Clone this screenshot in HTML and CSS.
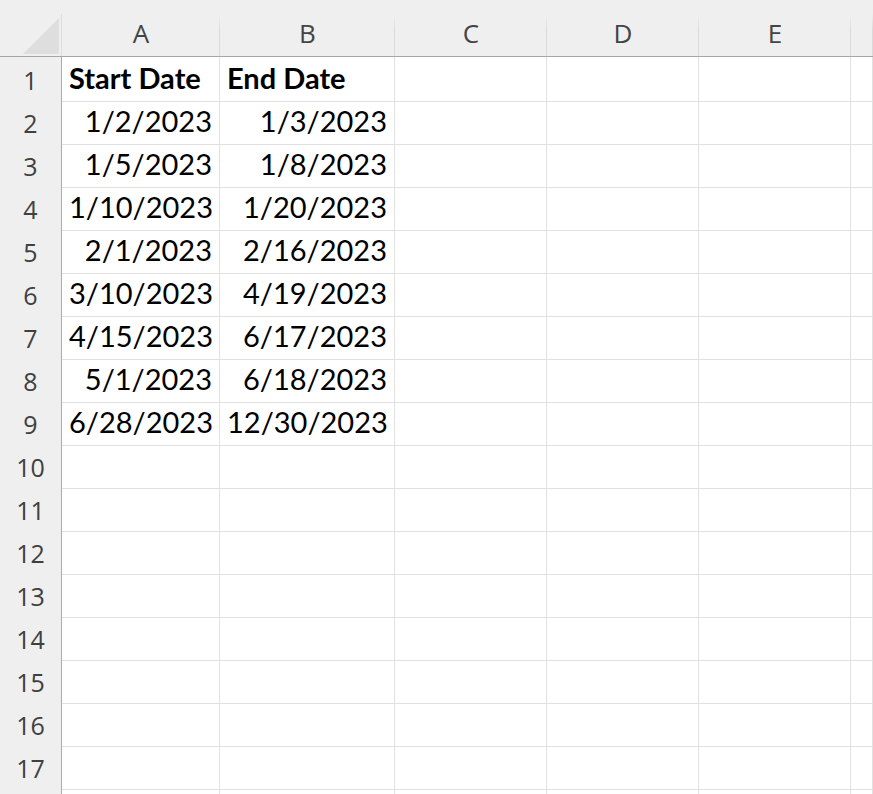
FILE: index.html
```html
<!DOCTYPE html>
<html lang="en">
<head>
    <meta charset="UTF-8">
    <title>Dates</title>
    <link rel="stylesheet" href="styles.css">
</head>
<body>
    <div class="sheet">
        <div class="row head-row">
            <div class="corner"><span class="corner-mark"></span></div>
            <div class="col-head">A</div>
            <div class="col-head">B</div>
            <div class="col-head">C</div>
            <div class="col-head">D</div>
            <div class="col-head">E</div>
            <div class="col-head"></div>
        </div>
        <div class="row">
            <div class="row-head">1</div>
            <div class="cell bold">Start Date</div>
            <div class="cell bold">End Date</div>
            <div class="cell"></div><div class="cell"></div><div class="cell"></div><div class="cell"></div>
        </div>
        <div class="row">
            <div class="row-head">2</div>
            <div class="cell num">1/2/2023</div>
            <div class="cell num">1/3/2023</div>
            <div class="cell"></div><div class="cell"></div><div class="cell"></div><div class="cell"></div>
        </div>
        <div class="row">
            <div class="row-head">3</div>
            <div class="cell num">1/5/2023</div>
            <div class="cell num">1/8/2023</div>
            <div class="cell"></div><div class="cell"></div><div class="cell"></div><div class="cell"></div>
        </div>
        <div class="row">
            <div class="row-head">4</div>
            <div class="cell num">1/10/2023</div>
            <div class="cell num">1/20/2023</div>
            <div class="cell"></div><div class="cell"></div><div class="cell"></div><div class="cell"></div>
        </div>
        <div class="row">
            <div class="row-head">5</div>
            <div class="cell num">2/1/2023</div>
            <div class="cell num">2/16/2023</div>
            <div class="cell"></div><div class="cell"></div><div class="cell"></div><div class="cell"></div>
        </div>
        <div class="row">
            <div class="row-head">6</div>
            <div class="cell num">3/10/2023</div>
            <div class="cell num">4/19/2023</div>
            <div class="cell"></div><div class="cell"></div><div class="cell"></div><div class="cell"></div>
        </div>
        <div class="row">
            <div class="row-head">7</div>
            <div class="cell num">4/15/2023</div>
            <div class="cell num">6/17/2023</div>
            <div class="cell"></div><div class="cell"></div><div class="cell"></div><div class="cell"></div>
        </div>
        <div class="row">
            <div class="row-head">8</div>
            <div class="cell num">5/1/2023</div>
            <div class="cell num">6/18/2023</div>
            <div class="cell"></div><div class="cell"></div><div class="cell"></div><div class="cell"></div>
        </div>
        <div class="row">
            <div class="row-head">9</div>
            <div class="cell num">6/28/2023</div>
            <div class="cell num">12/30/2023</div>
            <div class="cell"></div><div class="cell"></div><div class="cell"></div><div class="cell"></div>
        </div>
        <div class="row">
            <div class="row-head">10</div>
            <div class="cell"></div><div class="cell"></div><div class="cell"></div><div class="cell"></div><div class="cell"></div><div class="cell"></div>
        </div>
        <div class="row">
            <div class="row-head">11</div>
            <div class="cell"></div><div class="cell"></div><div class="cell"></div><div class="cell"></div><div class="cell"></div><div class="cell"></div>
        </div>
        <div class="row">
            <div class="row-head">12</div>
            <div class="cell"></div><div class="cell"></div><div class="cell"></div><div class="cell"></div><div class="cell"></div><div class="cell"></div>
        </div>
        <div class="row">
            <div class="row-head">13</div>
            <div class="cell"></div><div class="cell"></div><div class="cell"></div><div class="cell"></div><div class="cell"></div><div class="cell"></div>
        </div>
        <div class="row">
            <div class="row-head">14</div>
            <div class="cell"></div><div class="cell"></div><div class="cell"></div><div class="cell"></div><div class="cell"></div><div class="cell"></div>
        </div>
        <div class="row">
            <div class="row-head">15</div>
            <div class="cell"></div><div class="cell"></div><div class="cell"></div><div class="cell"></div><div class="cell"></div><div class="cell"></div>
        </div>
        <div class="row">
            <div class="row-head">16</div>
            <div class="cell"></div><div class="cell"></div><div class="cell"></div><div class="cell"></div><div class="cell"></div><div class="cell"></div>
        </div>
        <div class="row">
            <div class="row-head">17</div>
            <div class="cell"></div><div class="cell"></div><div class="cell"></div><div class="cell"></div><div class="cell"></div><div class="cell"></div>
        </div>
        <div class="row">
            <div class="row-head"></div>
            <div class="cell"></div><div class="cell"></div><div class="cell"></div><div class="cell"></div><div class="cell"></div><div class="cell"></div>
        </div>
    </div>
</body>
</html>
```

FILE: styles.css
```css
html, body {
    margin: 0;
    padding: 0;
    background-color: #ffffff;
    overflow: hidden;
}
.sheet {
    width: 873px;
    height: 794px;
    overflow: hidden;
}
.row {
    display: grid;
    grid-template-columns: 62px 158px 175px 152px 152px 152px 1fr;
    height: 43px;
}
.head-row {
    height: 57px;
    background-color: #efefef;
    border-bottom: 1px solid #a6a6a6;
    box-sizing: border-box;
}
.corner {
    position: relative;
    background: linear-gradient(to bottom, transparent 14px, #dcdcdc 14px) right / 1px 100% no-repeat;
}
.corner-mark {
    position: absolute;
    left: 23px;
    top: 18px;
    width: 36px;
    height: 36px;
    background-color: #dedede;
    clip-path: polygon(100% 0, 100% 100%, 0 100%);
}
.col-head {
    font-family: "Open Sans", "Noto Sans", sans-serif;
    font-size: 26px;
    color: #444444;
    text-align: center;
    line-height: 45px;
    padding-top: 11px;
    box-sizing: border-box;
    background: linear-gradient(to bottom, rgba(218, 218, 218, 0) 14px, #dadada 30px) right / 1px 100% no-repeat;
}
.row-head {
    font-family: "Open Sans", "Noto Sans", sans-serif;
    font-size: 25px;
    color: #404040;
    text-align: center;
    line-height: 42px;
    padding-top: 2px;
    box-sizing: border-box;
    background-color: #efefef;
    border-right: 1px solid #ababab;
    border-bottom: 1px solid #dcdcdc;
}
.cell {
    box-sizing: border-box;
    border-right: 1px solid #e1e1e1;
    border-bottom: 1px solid #e1e1e1;
    font-family: Lato, "Liberation Sans", sans-serif;
    font-size: 29px;
    line-height: 42px;
    color: #000000;
    padding: 0 7px;
    white-space: nowrap;
}
.num {
    text-align: right;
}
.bold {
    font-weight: bold;
}
```
